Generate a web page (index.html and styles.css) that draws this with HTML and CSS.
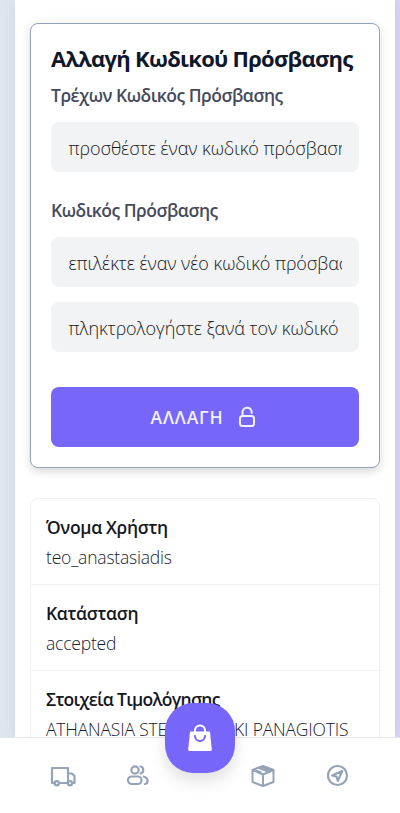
FILE: index.html
```html
<!DOCTYPE html>
<html lang="el">
<head>
<meta charset="utf-8">
<meta name="viewport" content="width=device-width, initial-scale=1">
<title>Αλλαγή Κωδικού Πρόσβασης</title>
<link rel="stylesheet" href="styles.css">
</head>
<body>
<main class="sheet">
  <form class="card">
    <h2 class="title">Αλλαγή Κωδικού Πρόσβασης</h2>
    <div class="label label-current">Τρέχων Κωδικός Πρόσβασης</div>
    <div class="field"><div class="placeholder">προσθέστε έναν κωδικό πρόσβασης</div></div>
    <div class="label label-new">Κωδικός Πρόσβασης</div>
    <div class="field"><div class="placeholder">επιλέκτε έναν νέο κωδικό πρόσβασης</div></div>
    <div class="field field-repeat"><div class="placeholder">πληκτρολογήστε ξανά τον κωδικό</div></div>
    <button class="submit" type="button">
      <span>ΑΛΛΑΓΗ</span>
      <svg width="20" height="24" viewBox="0 0 20 24" fill="none" stroke="currentColor" stroke-width="2" stroke-linecap="round" stroke-linejoin="round"><path d="M5.500 11V7.500a4.600 4.600 0 0 1 9.200-.5v1"/><rect x="3" y="11" width="14" height="10" rx="2.500"/></svg>
    </button>
  </form>
  <section class="details">
    <div class="row"><div class="name">Όνομα Χρήστη</div><div class="value">teo_anastasiadis</div></div>
    <div class="row"><div class="name">Κατάσταση</div><div class="value">accepted</div></div>
    <div class="row"><div class="name name-billing">Στοιχεία Τιμολόγησης</div><div class="value value-billing">ATHANASIA STEFANODAKI PANAGIOTIS</div></div>
  </section>
</main>
<nav class="tabs">
  <a class="tab"><svg width="26" height="26" viewBox="0 0 26 26" fill="none" stroke="currentColor" stroke-width="2.200" stroke-linejoin="round"><path d="M4.500 20H2V5h16v15H9.500M18 10.500h4l2.500 2.500v7h-1.500M18 20h-2"/><circle cx="6.800" cy="20.200" r="2.100"/><circle cx="20" cy="20.200" r="2.100"/></svg></a>
  <a class="tab"><svg width="26" height="26" viewBox="0 0 26 26" fill="none" stroke="currentColor" stroke-width="2.200" stroke-linecap="round" stroke-linejoin="round"><circle cx="10" cy="7" r="3.600"/><rect x="3" y="13.500" width="13.500" height="7.500" rx="3.750"/><path d="M15.500 3.500a3.600 3.600 0 0 1 0 7M18.800 13.700c2.200.5 3.800 2 3.800 4.100 0 1.800-1 3-2.600 3.200"/></svg></a>
  <a class="cart"><svg width="28" height="30" viewBox="0 0 28 30"><path d="M4 8.500h20l1.800 18q.1 1.500-1.400 1.500H3.600q-1.500 0-1.400-1.500z" fill="#fff"/><path d="M9 10V7.500a5 5 0 0 1 10 0V10" fill="none" stroke="#fff" stroke-width="2"/><path d="M9 13a5 5 0 0 0 10 0" fill="none" stroke="#7666f9" stroke-width="2" stroke-linecap="round"/></svg></a>
  <a class="tab"><svg width="26" height="26" viewBox="0 0 26 26" fill="none" stroke="currentColor" stroke-width="2" stroke-linejoin="round"><path d="M2.500 7 13 3l10.500 4v12L13 23 2.500 19zM2.500 7l10.500 4.500L23.500 7M13 11.500V23"/><path d="M7 5.200 13 3l10.500 4-6 2.600-10-4z" fill="currentColor" stroke="none"/><path d="m4.500 8 5.500 2.300 2.500-1.300L7 6.800z" fill="currentColor" stroke="none"/></svg></a>
  <a class="tab"><svg width="26" height="26" viewBox="0 0 26 26" fill="none" stroke="currentColor" stroke-width="2.200" stroke-linejoin="round"><circle cx="12.500" cy="12.500" r="9.500"/><path d="m17.200 8-10 4.400 4.300 1.200 1.400 4.200z"/></svg></a>
</nav>
</body>
</html>
```
FILE: styles.css
```css
* { box-sizing: border-box; }
html, body { margin: 0; height: 813px; overflow: hidden; }
body {
  display: flex;
  flex-direction: column;
  font-family: "Open Sans", "Noto Sans", sans-serif;
  background: linear-gradient(90deg, #dfe6f0 50%, #dad4f7 50%);
}
.sheet {
  flex: none;
  height: 737px;
  margin: 0 5px 0 15px;
  padding: 23px 15px 0;
  overflow: hidden;
  background: #fff;
  box-shadow: 0 0 12px rgba(60, 70, 120, .1);
}
.card {
  height: 445px;
  padding: 20px;
  border: 1px solid #94a3b8;
  border-radius: 8px;
  background: #fff;
  box-shadow: 0 4px 8px rgba(0, 0, 0, .12), 0 0 14px rgba(0, 0, 0, .04);
}
.title, .label, .placeholder, .name, .value { white-space: nowrap; }
.title {
  margin: 0;
  height: 32px;
  line-height: 28px;
  font-size: 22px;
  font-weight: 700;
  letter-spacing: -.73px;
  color: #0f172a;
}
.label {
  margin-bottom: 10px;
  line-height: 24px;
  font-size: 17.500px;
  font-weight: 600;
  letter-spacing: -.48px;
  color: #454a5c;
}
.label-current { padding-top: 7px; height: 36px; }
.label-new { height: 28px; margin-top: 27px; line-height: 22px; }
.field {
  height: 50px;
  padding: 0 17px;
  border-radius: 8px;
  background: #f2f3f5;
}
.placeholder {
  overflow: hidden;
  height: 50px;
  padding-left: .5px;
  line-height: 52px;
  font-size: 18px;
  font-weight: 300;
  letter-spacing: -.06px;
  color: #181818;
}
.field-repeat { margin-top: 15px; }
.submit {
  display: flex;
  align-items: center;
  justify-content: center;
  gap: 13px;
  width: 100%;
  height: 60px;
  margin-top: 35px;
  padding: 0 3px 0 0;
  border: 0;
  border-radius: 8px;
  background: #7666f9;
  color: #f3f1ff;
  font: 600 17.500px/60px "Open Sans", sans-serif;
  letter-spacing: .9px;
}
.details {
  margin-top: 30px;
  border: 1px solid #f1f2f4;
  border-radius: 8px;
}
.row {
  height: 86px;
  padding: 13px 15px;
  border-bottom: 1px solid #f1f2f4;
}
.name {
  height: 30px;
  line-height: 30px;
  font-size: 17.500px;
  font-weight: 600;
  letter-spacing: -.33px;
  color: #15181f;
}
.name-billing { letter-spacing: -.7px; }
.value {
  height: 30px;
  line-height: 30px;
  font-size: 17.500px;
  font-weight: 300;
  letter-spacing: -.2px;
  color: #182030;
}
.value-billing { letter-spacing: -.18px; }
.tabs {
  display: flex;
  align-items: flex-start;
  position: relative;
  height: 76px;
  padding: 0 25px;
  border-top: 1px solid #e5e7eb;
  background: #fff;
}
.tab {
  width: 75px;
  height: 76px;
  display: flex;
  align-items: center;
  justify-content: center;
  color: #94a3b8;
}
.cart {
  flex: none;
  display: flex;
  align-items: center;
  justify-content: center;
  width: 70px;
  height: 70px;
  margin: -35px -10px 0 -10px;
  border-radius: 28px;
  background: #7666f9;
  box-shadow: 0 8px 16px rgba(0, 0, 0, .12);
}
```
